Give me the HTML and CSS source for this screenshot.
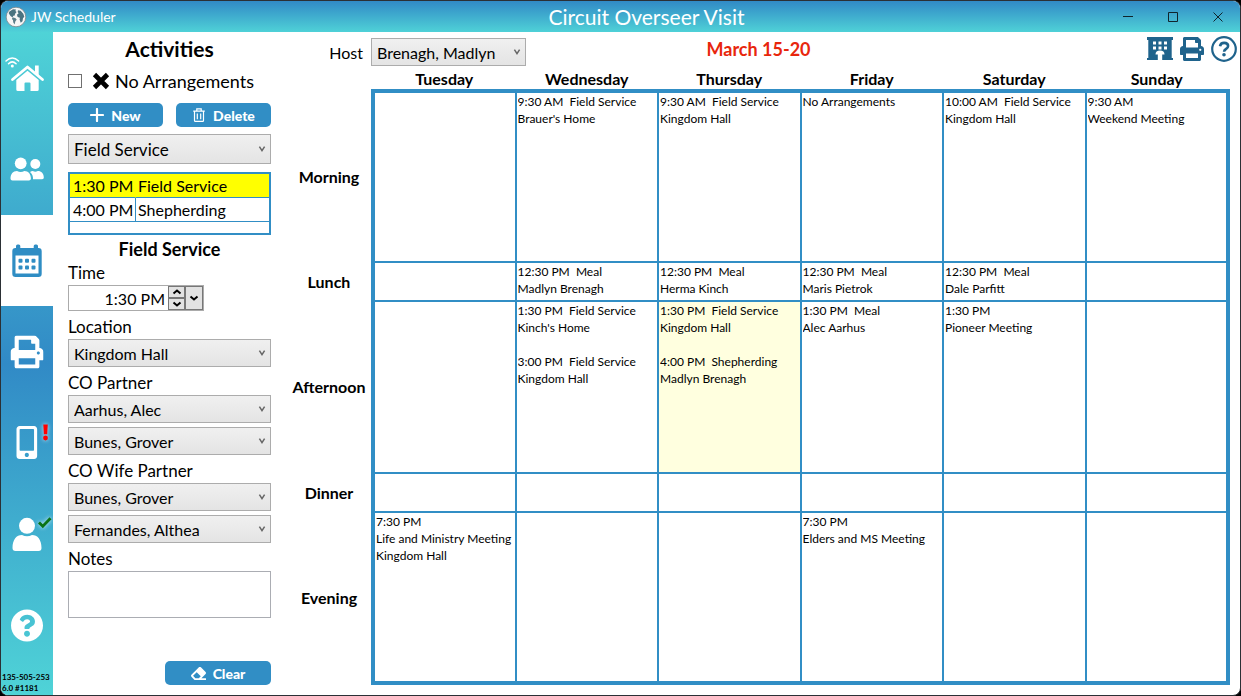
FILE: index.html
```html
<!DOCTYPE html>
<html lang="en">
<head>
<meta charset="utf-8">
<meta name="viewport" content="width=device-width, initial-scale=1">
<title>JW Scheduler - Circuit Overseer Visit</title>
<link rel="stylesheet" href="styles.css">
</head>
<body>
<svg class="defs" aria-hidden="true">
  <symbol id="chevron" viewBox="0 0 8 8"><path d="M1.4 1.6 4 5.6 6.6 1.6" fill="none" stroke="#666" stroke-width="1.5"/></symbol>
  <symbol id="print" viewBox="0 0 512 512"><path d="M448 192V77.25c0-8.49-3.37-16.62-9.37-22.63L393.37 9.37c-6-6-14.14-9.37-22.63-9.37H96C78.33 0 64 14.33 64 32v160c-35.35 0-64 28.65-64 64v112c0 8.84 7.16 16 16 16h48v96c0 17.67 14.33 32 32 32h320c17.67 0 32-14.33 32-32v-96h48c8.84 0 16-7.16 16-16V256c0-35.35-28.65-64-64-64zm-64 256H128v-96h256v96zm0-224H128V64h192v48c0 8.84 7.16 16 16 16h48v96zm48 72c-13.25 0-24-10.75-24-24 0-13.26 10.75-24 24-24s24 10.74 24 24c0 13.25-10.75 24-24 24z"/></symbol>
</svg>
<div class="window">
  <header class="titlebar">
    <div class="brand">
      <svg class="globe" viewBox="0 0 22 22" aria-hidden="true">
        <circle cx="11" cy="11" r="9.800" fill="#f6f6f6" stroke="#7d878b" stroke-width=".8"/>
        <path d="M4.500 5.500 8 3.200l3 .3-.6 1.600 1.200 1-1.500 1.600-.4 1.800-2 .4.800 1.600-1.600-.5-1.600-1.200L3.600 7z" fill="#4b7380"/>
        <path d="M7.500 11.500l2.700.5 1.500 1.600-1.400 1.900-.7 3-1.300-1.900-.4-2.500-1-1.200z" fill="#5d7f8a"/>
        <path d="M13 4.200l2.700.5 2.600 3 1 3-1.300 1.500-.5 3-1.800 1.600-1.100-3.200.3-1.900-2.300-.6-.6-2.300 1.600-1.600-.9-1.100z" fill="#4b7380"/>
      </svg>
      <span>JW Scheduler</span>
    </div>
    <h1 class="title">Circuit Overseer Visit</h1>
    <div class="controls">
      <button aria-label="Minimize"><svg viewBox="0 0 12 12"><path d="M1 5.500h10"/></svg></button>
      <button aria-label="Maximize"><svg viewBox="0 0 12 12"><path d="M1.500 1.500h9v9h-9z"/></svg></button>
      <button aria-label="Close"><svg viewBox="0 0 12 12"><path d="M1.500 1.500l9 9M10.500 1.500l-9 9"/></svg></button>
    </div>
  </header>

  <div class="body">
    <nav class="sidebar">
      <a href="#home" aria-label="Home"><svg viewBox="0 0 52 60">
        <path d="M11.500 31.500 26.500 19 41.500 31.500" fill="none" stroke="#fff" stroke-width="2.800" stroke-linecap="round" stroke-linejoin="round"/>
        <path d="M34 17.500h3.700v10L34 24zM15.300 32l11.200-9.200L37.700 32v9.500q0 1.500-1.500 1.500H29.500v-7.500q0-1-1-1h-4q-1 0-1 1V43h-6.700q-1.500 0-1.500-1.500z" fill="#fff"/>
        <g fill="none" stroke="#fff" stroke-width="1.500" stroke-linecap="round"><path d="M5 13q6.300-6 12.600 0M7.500 15.700q3.800-3.600 7.600 0"/></g><circle cx="11.300" cy="18" r="1.500" fill="#fff"/>
      </svg></a>
      <a href="#people" aria-label="People"><svg viewBox="0 0 52 60" fill="#fff">
        <circle cx="19.700" cy="24.300" r="5.900"/><circle cx="34.300" cy="25" r="5"/>
        <path d="M9.500 39.500c0-4.500 2.500-7.500 6.500-7.500 1.300.7 2.500 1 3.700 1s2.400-.3 3.700-1c4 0 6.500 3 6.500 7.500 0 1.200-.8 2-2 2H11.500c-1.200 0-2-.8-2-2z"/>
        <path d="M29 33c.9-.6 1.800-.9 2.800-.9 1.700.7 3.300.7 5 0 3.600 0 6 2.600 6 6.500 0 1-.7 1.700-1.700 1.700H32c.3-2.900-.8-5.400-3-7.300z"/>
      </svg></a>
      <a href="#calendar" class="active" aria-label="Calendar" aria-current="page"><svg viewBox="0 0 52 60" fill="#2f8dc4">
        <path fill-rule="evenodd" d="M15 17V15q0-1.500 1.500-1.500h1.300q1.500 0 1.500 1.500v2h13.400v-2q0-1.500 1.500-1.500h1.300Q37 13.500 37 15v2h.5q3.200 0 3.200 3.200v22.600q0 3.200-3.200 3.200h-23q-3.200 0-3.200-3.200V20.200q0-3.200 3.200-3.200zM14.500 24.500v18h23v-18z"/>
        <g><rect x="17.500" y="27.800" width="4" height="4" rx="1"/><rect x="24" y="27.800" width="4" height="4" rx="1"/><rect x="30.500" y="27.800" width="4" height="4" rx="1"/><rect x="17.500" y="34.500" width="4" height="4" rx="1"/><rect x="24" y="34.500" width="4" height="4" rx="1"/><rect x="30.500" y="34.500" width="4" height="4" rx="1"/></g>
      </svg></a>
      <a href="#print" aria-label="Print"><svg viewBox="0 0 52 60" fill="#fff"><use href="#print" x="9.500" y="13.500" width="33" height="33"/></svg></a>
      <a href="#mobile" aria-label="Mobile"><svg viewBox="0 0 52 60">
        <path transform="translate(15.500 13) scale(.0645)" fill="#fff" d="M272 0H48C21.500 0 0 21.500 0 48v416c0 26.500 21.500 48 48 48h224c26.500 0 48-21.500 48-48V48c0-26.500-21.500-48-48-48zM160 480c-17.700 0-32-14.300-32-32s14.300-32 32-32 32 14.300 32 32-14.300 32-32 32zm112-108c0 6.600-5.400 12-12 12H60c-6.600 0-12-5.400-12-12V60c0-6.600 5.400-12 12-12h200c6.600 0 12 5.400 12 12v312z"/>
        <g class="glow" fill="#f00"><path d="M42.300 11.500h4.500l-.6 9.800h-3.300z"/><circle cx="44.500" cy="25" r="2.400"/></g>
      </svg></a>
      <a href="#account" aria-label="Account"><svg viewBox="0 0 52 60">
        <circle cx="26" cy="20.800" r="8" fill="#fff"/>
        <path d="M11.500 43c0-8.500 4-13 9.500-13 3.300 1.600 6.700 1.600 10 0 5.500 0 9.500 4.500 9.500 13 0 2-1 3-3 3h-23c-2 0-3-1-3-3z" fill="#fff"/>
        <path class="glow" d="M38 17.500l3.800 3.800 7.700-8" fill="none" stroke="#0a7316" stroke-width="2.800"/>
      </svg></a>
      <a href="#help" aria-label="Help"><svg viewBox="0 0 52 60">
        <path transform="translate(9.500 13) scale(.0645)" fill="#fff" d="M504 256c0 136.997-111.043 248-248 248S8 392.997 8 256C8 119.083 119.043 8 256 8s248 111.083 248 248zM262.655 90c-54.497 0-89.255 22.957-116.549 63.758-3.536 5.286-2.353 12.415 2.715 16.258l34.699 26.310c5.205 3.947 12.621 3.008 16.665-2.122 17.864-22.658 30.113-35.797 57.303-35.797 20.429 0 45.698 13.148 45.698 32.958 0 14.976-12.363 22.667-32.534 33.976C247.128 238.528 216 254.941 216 296v4c0 6.627 5.373 12 12 12h56c6.627 0 12-5.373 12-12v-1.333c0-28.462 83.186-29.647 83.186-106.667 0-58.002-60.165-102-116.531-102zM256 338c-25.365 0-46 20.635-46 46 0 25.364 20.635 46 46 46s46-20.636 46-46c0-25.364-20.635-46-46-46z"/>
      </svg></a>
      <div class="version">135-505-253<br>6.0 #1181</div>
    </nav>

    <form class="panel">
      <h2 class="heading">Activities</h2>
      <label class="check"><input type="checkbox">
        <svg viewBox="0 0 18 18" aria-hidden="true"><path d="M2.500 2.500l13 13M15.500 2.500l-13 13" stroke="#000" stroke-width="4.600"/></svg>
        <span>No Arrangements</span></label>
      <div class="actions">
        <button type="button" class="btn"><svg viewBox="0 0 14 14"><path d="M7 1v12M1 7h12" stroke="#fff" stroke-width="2.200" stroke-linecap="round"/></svg>New</button>
        <button type="button" class="btn"><svg viewBox="0 0 14 14" fill="none" stroke="#fff" stroke-width="1.200"><path d="M1.200 3.200h11.600M4.800 3V.9h4.400V3M2.500 3.500v9q0 .9.900.9h7.200q.9 0 .9-.9v-9M5.300 5.500v5.700M8.700 5.500v5.700"/></svg>Delete</button>
      </div>
      <div class="select tall"><select aria-label="Activity type"><option>Field Service</option></select><svg><use href="#chevron"/></svg></div>
      <table class="list" aria-label="Activities">
        <colgroup><col class="time-col"><col></colgroup>
        <tbody>
        <tr class="selected"><td>1:30 PM</td><td>Field Service</td></tr>
        <tr><td>4:00 PM</td><td>Shepherding</td></tr>
        <tr class="blank"><td colspan="2"></td></tr>
        </tbody>
      </table>
      <h3 class="subheading">Field Service</h3>
      <div class="field">
        <label for="time">Time</label>
        <div class="timebox">
          <input id="time" type="text" value="1:30 PM">
          <div class="spin">
            <button type="button" aria-label="Later"><svg viewBox="0 0 10 6"><path d="M1.500 4.500 5 1.500l3.500 3"/></svg></button>
            <button type="button" aria-label="Earlier"><svg viewBox="0 0 10 6"><path d="M1.500 1.500 5 4.500l3.500-3"/></svg></button>
          </div>
          <button type="button" class="drop" aria-label="Choose time"><svg viewBox="0 0 10 6"><path d="M1.500 1.500 5 4.500l3.500-3"/></svg></button>
        </div>
      </div>
      <div class="field">
        <label for="location">Location</label>
        <div class="select"><select id="location"><option>Kingdom Hall</option></select><svg><use href="#chevron"/></svg></div>
      </div>
      <div class="field">
        <label for="partner">CO Partner</label>
        <div class="select"><select id="partner"><option>Aarhus, Alec</option></select><svg><use href="#chevron"/></svg></div>
        <div class="select second"><select aria-label="Second CO partner"><option>Bunes, Grover</option></select><svg><use href="#chevron"/></svg></div>
      </div>
      <div class="field">
        <label for="wife">CO Wife Partner</label>
        <div class="select"><select id="wife"><option>Bunes, Grover</option></select><svg><use href="#chevron"/></svg></div>
        <div class="select second"><select aria-label="Second CO wife partner"><option>Fernandes, Althea</option></select><svg><use href="#chevron"/></svg></div>
      </div>
      <div class="field">
        <label for="notes">Notes</label>
        <textarea id="notes"></textarea>
      </div>
      <button type="reset" class="btn clear"><svg viewBox="0 0 512 512" fill="#fff"><path d="M497.941 273.941c18.745-18.745 18.745-49.137 0-67.882l-160-160c-18.745-18.745-49.136-18.746-67.883 0l-256 256c-18.745 18.745-18.745 49.137 0 67.882l96 96A48.004 48.004 0 0 0 144 480h356c6.627 0 12-5.373 12-12v-40c0-6.627-5.373-12-12-12H355.883l142.058-142.059zm-302.627-62.627l137.373 137.373L265.373 416H150.628l-80-80 124.686-124.686z"/></svg>Clear</button>
    </form>

    <main class="schedule">
      <div class="toolbar">
        <div class="host">
          <label for="host">Host</label>
          <div class="select"><select id="host"><option>Brenagh, Madlyn</option></select><svg><use href="#chevron"/></svg></div>
        </div>
        <div class="dates">March 15-20</div>
        <div class="tools">
          <button aria-label="Kingdom Hall"><svg viewBox="0 0 26 26"><path fill-rule="evenodd" d="M0 1h26v3h-1.300v18H26v2H0v-2h1.300V4H0zM6 5.500v3h3v-3zM11.500 5.500v3h3v-3zM17 5.500v3h3v-3zM6 10.500v3h3v-3zM11.500 10.500v3h3v-3zM17 10.500v3h3v-3zM8.500 18.500q0-4 4.500-4t4.500 4h-2.300V24h-4.400v-5.500z"/></svg></button>
          <button aria-label="Print schedule"><svg viewBox="0 0 26 26"><use href="#print" x="1" y="1" width="24" height="24"/></svg></button>
          <button aria-label="Help"><svg viewBox="0 0 26 26"><circle cx="13" cy="13" r="11.800" fill="none" stroke="#1f638c" stroke-width="2.200"/><path d="M9 10.300q.6-3.400 4.100-3.400 4 0 4 3.200 0 1.800-2.100 2.900-1.900 1-1.900 2.800" fill="none" stroke="#1f638c" stroke-width="2.600"/><circle cx="13" cy="18.800" r="1.800"/></svg></button>
        </div>
      </div>
      <table class="grid">
        <colgroup><col class="label-col"><col><col><col><col><col><col></colgroup>
        <thead><tr><td></td><th scope="col">Tuesday</th><th scope="col">Wednesday</th><th scope="col">Thursday</th><th scope="col">Friday</th><th scope="col">Saturday</th><th scope="col">Sunday</th></tr></thead>
        <tbody>
          <tr class="long"><th scope="row">Morning</th><td></td><td><p>9:30 AM  Field Service
Brauer's Home</p></td><td><p>9:30 AM  Field Service
Kingdom Hall</p></td><td><p>No Arrangements</p></td><td><p>10:00 AM  Field Service
Kingdom Hall</p></td><td><p>9:30 AM
Weekend Meeting</p></td></tr>
          <tr class="short"><th scope="row">Lunch</th><td></td><td><p>12:30 PM  Meal
Madlyn Brenagh</p></td><td><p>12:30 PM  Meal
Herma Kinch</p></td><td><p>12:30 PM  Meal
Maris Pietrok</p></td><td><p>12:30 PM  Meal
Dale Parfitt</p></td><td></td></tr>
          <tr class="long"><th scope="row">Afternoon</th><td></td><td><p>1:30 PM  Field Service
Kinch's Home

3:00 PM  Field Service
Kingdom Hall</p></td><td class="current"><p>1:30 PM  Field Service
Kingdom Hall

4:00 PM  Shepherding
Madlyn Brenagh</p></td><td><p>1:30 PM  Meal
Alec Aarhus</p></td><td><p>1:30 PM
Pioneer Meeting</p></td><td></td></tr>
          <tr class="short"><th scope="row">Dinner</th><td></td><td></td><td></td><td></td><td></td><td></td></tr>
          <tr class="long"><th scope="row">Evening</th><td><p>7:30 PM
Life and Ministry Meeting
Kingdom Hall</p></td><td></td><td></td><td><p>7:30 PM
Elders and MS Meeting</p></td><td></td><td></td></tr>
        </tbody>
      </table>
    </main>
  </div>
</div>
</body>
</html>
```
FILE: styles.css
```css
* { box-sizing: border-box; }
body {
  margin: 0;
  background: #000;
  color: #000;
  font-family: Lato, "Open Sans", sans-serif;
  font-size: 16px;
}
h1, h2, h3, p { margin: 0; }
button, input, select, textarea { font: inherit; color: inherit; }
button { border: 0; padding: 0; background: none; }
svg { display: block; }
.defs { position: absolute; width: 0; height: 0; }

.window {
  display: flex;
  flex-direction: column;
  min-height: 100vh;
  border: 1px solid #2b3035;
  border-radius: 8px;
  background: #fff;
  overflow: hidden;
}

.titlebar {
  display: grid;
  grid-template-columns: 1fr auto 1fr;
  align-items: center;
  height: 31px;
  padding-left: 52px;
  background: linear-gradient(#318ac6, #4fd1d7);
  color: #fff;
}
.brand {
  display: flex;
  align-items: center;
  gap: 4px;
  margin-left: -48px;
  font-size: 14px;
}
.globe { width: 22px; height: 22px; }
.title { font-size: 21px; font-weight: 400; line-height: 30px; }
.controls { display: flex; justify-content: flex-end; }
.controls button { width: 45px; height: 30px; display: grid; place-items: center; }
.controls svg { width: 12px; height: 12px; fill: none; stroke: #10242c; stroke-width: 1; }

.body { display: flex; flex: 1; }

.sidebar {
  display: flex;
  flex-direction: column;
  flex: none;
  width: 52px;
  background: linear-gradient(#4fd3d7, #318ac6 50%, #4fd3d7);
}
.sidebar a { flex: 1; display: grid; place-items: center; }
.sidebar a.active { background: #fff; }
.sidebar a svg { width: 52px; height: 60px; }
.glow { filter: drop-shadow(0 0 2px rgba(255, 255, 255, .8)); }
.version { height: 23px; padding-left: 1px; font-size: 8px; font-weight: 700; line-height: 11px; white-space: nowrap; }

.panel {
  display: flex;
  flex-direction: column;
  flex: none;
  width: 218px;
  padding: 3px 0 10px 15px;
}
.heading { font-size: 21px; line-height: 28px; text-align: center; }
.check { display: flex; align-items: center; height: 36px; margin-bottom: 4px; font-size: 18px; }
.check input {
  appearance: none;
  width: 14px;
  height: 14px;
  margin: 0 10px 0 0;
  border: 1px solid #707070;
  background: #fff;
}
.check svg { width: 18px; height: 18px; margin-right: 5px; }
.actions { display: grid; grid-template-columns: 1fr 1fr; gap: 13px; margin-bottom: 7px; }
.btn {
  display: flex;
  align-items: center;
  justify-content: center;
  gap: 7px;
  height: 24px;
  border-radius: 5px;
  background: #318ec5;
  color: #fff;
  font-size: 14px;
  font-weight: 900;
}
.btn svg { width: 14px; height: 14px; }

.select { display: grid; height: 28px; }
.select.tall { height: 30px; }
.select.second { margin-top: 4px; }
.select > * { grid-area: 1 / 1; }
.select select {
  appearance: none;
  width: 100%;
  padding: 0 20px 0 5px;
  border: 1px solid #acacac;
  border-radius: 0;
  background: linear-gradient(#f0f0f0, #e4e4e4);
  font-size: 16px;
}
.select.tall select { font-size: 17px; }
.select svg { width: 8px; height: 8px; align-self: center; justify-self: end; margin-right: 5px; pointer-events: none; }

.list {
  width: 100%;
  margin-top: 8px;
  border: 2px solid #318ec5;
  border-spacing: 0;
  table-layout: fixed;
  font-size: 16px;
  line-height: 23px;
}
.time-col { width: 66px; }
.list td { padding: 0 2px 0 3px; border-bottom: 1px solid #318ec5; white-space: nowrap; }
.list td:first-child { border-right: 1px solid #318ec5; }
.list td:last-child { border-right: 0; padding-left: 2px; }
.list .selected td { background: #ff0; border-right-color: #ff0; }
.list .blank td { height: 11px; padding: 0; border: 0; line-height: 0; }
.subheading { margin-top: 3px; font-size: 18px; line-height: 23px; text-align: center; }

.field { margin-bottom: 4px; }
.field label { display: block; font-size: 17px; line-height: 24px; }
.timebox { display: flex; width: 136px; height: 26px; border: 1px solid #ababab; }
.timebox input { flex: 1; min-width: 0; border: 0; padding: 0 3px; text-align: right; }
.spin { display: grid; grid-template-rows: 1fr 1fr; width: 17px; }
.timebox button { display: grid; place-items: center; border: 1px solid #777; background: #e2e2e2; }
.timebox .drop { width: 18px; }
.timebox svg { width: 10px; height: 6px; fill: none; stroke: #000; stroke-width: 2; }
textarea { display: block; width: 100%; height: 47px; border: 1px solid #abadb3; resize: none; background: #fff; }
.clear { width: 106px; margin-top: auto; align-self: flex-end; }
.clear svg { width: 15px; height: 15px; }

.schedule { display: flex; flex-direction: column; flex: 1; min-width: 0; padding: 4px 3px 10px 9px; }
.toolbar { display: grid; grid-template-columns: 1fr auto 1fr; align-items: start; height: 32px; }
.host { display: flex; align-items: center; gap: 8px; padding-top: 2px; }
.host label { width: 83px; text-align: right; }
.host .select { width: 155px; }
.dates { color: #e8260c; font-size: 18px; font-weight: 700; line-height: 26px; }
.tools { display: flex; justify-content: flex-end; gap: 6px; }
.tools svg { width: 26px; height: 26px; fill: #1f638c; }

.grid { flex: 1; width: calc(100% - 14px); margin: 0 7px; border-collapse: collapse; table-layout: fixed; }
.label-col { width: 86px; }
.grid th { padding: 0; font-size: 16px; font-weight: 700; line-height: 21px; }
.grid thead td { padding: 0; }
.grid tbody td {
  padding: 0 1px;
  border: 2px solid #318ec5;
  vertical-align: top;
}
.grid tbody td:nth-child(2) { border-left-width: 4px; }
.grid tbody td:last-child { border-right-width: 4px; }
.grid tbody tr:first-child td { border-top-width: 4px; }
.grid tbody tr:last-child td { border-bottom-width: 4px; }
.grid .long { height: 171px; }
.grid .short { height: 39px; }
.grid p { overflow: hidden; font-size: 12px; line-height: 17px; white-space: pre; }
.grid .current { background: #ffffdf; }
```
